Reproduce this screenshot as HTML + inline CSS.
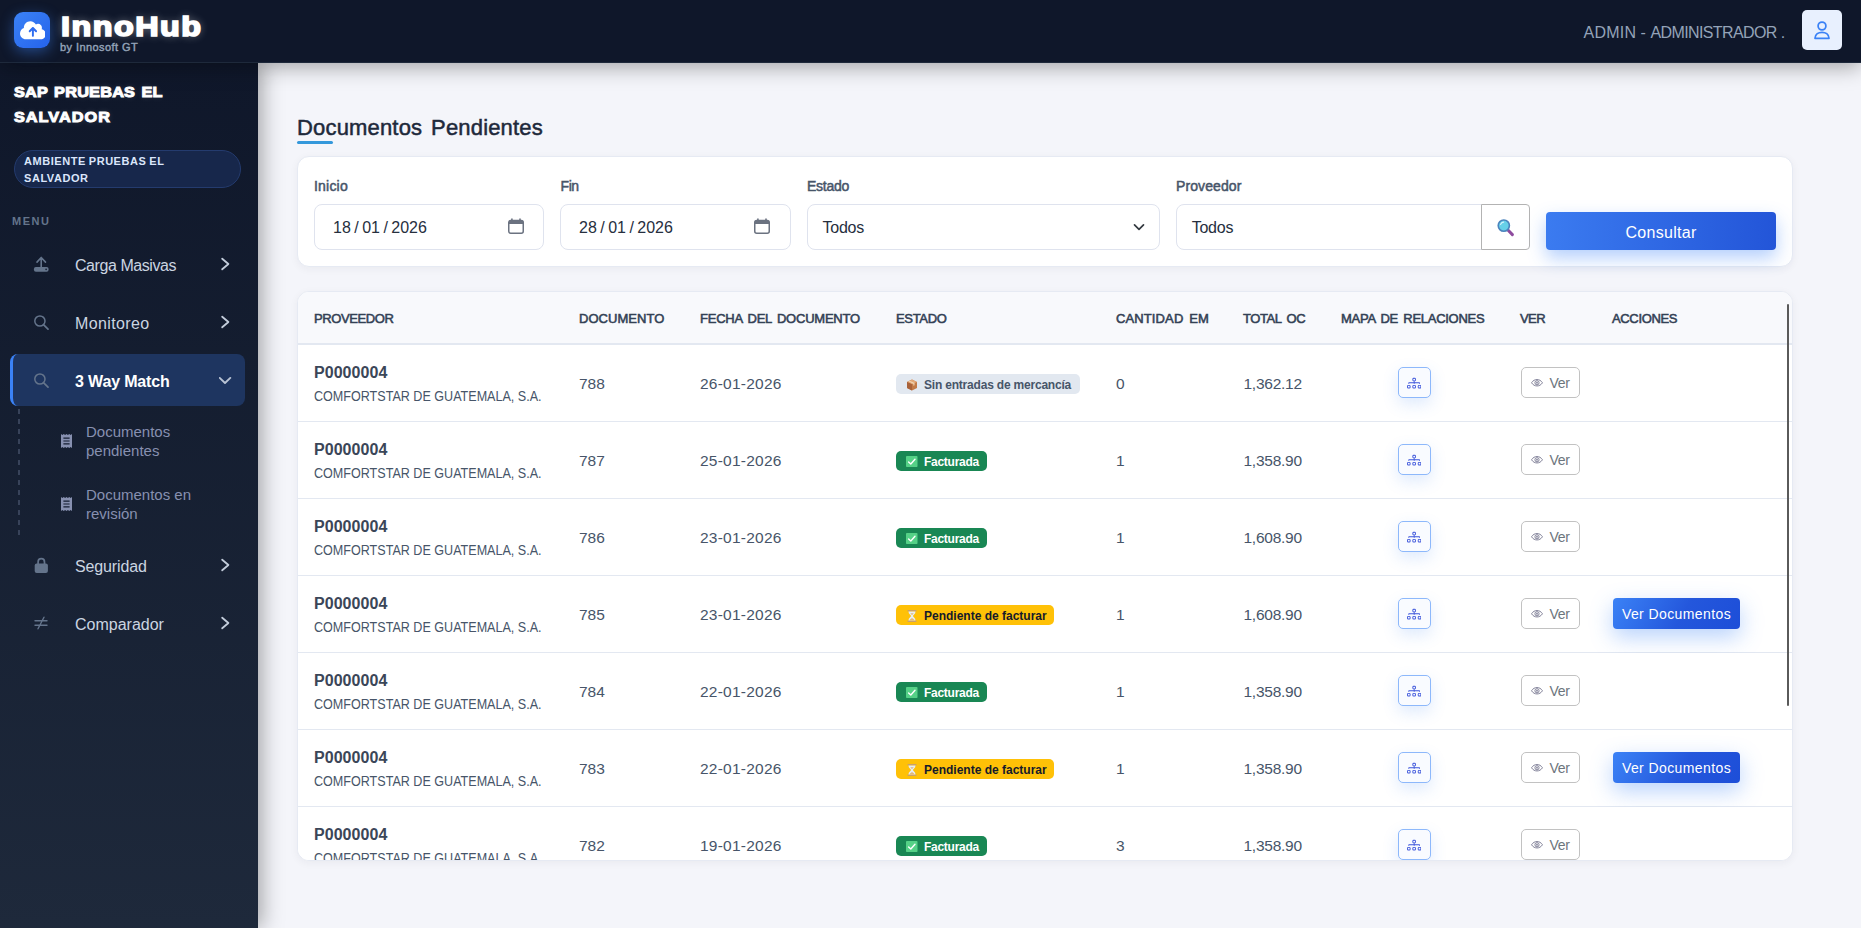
<!DOCTYPE html>
<html lang="es">
<head>
<meta charset="utf-8">
<title>InnoHub - Documentos Pendientes</title>
<style>
*{box-sizing:border-box;margin:0;padding:0}
html,body{width:1861px;height:928px;overflow:hidden}
body{font-family:"Liberation Sans",sans-serif;background:#f4f5fa;color:#334155;position:relative}
.abs{position:absolute}
/* ---------- header ---------- */
#hdr{position:absolute;left:0;top:0;width:1861px;height:63px;background:#0f172a;border-bottom:1px solid #1e293b;z-index:5;box-shadow:0 4px 20px rgba(0,0,0,.34)}
#logo{position:absolute;left:14px;top:12px;width:36px;height:36px;border-radius:9px;background:linear-gradient(135deg,#3b82f6 0%,#2563eb 100%);box-shadow:0 4px 14px rgba(59,130,246,.45)}
#brand{position:absolute;left:60.5px;top:9px;font-size:28px;line-height:36px;font-weight:700;color:#fff;letter-spacing:1.3px;-webkit-text-stroke:1.7px #fff;transform:scaleX(1.155);transform-origin:0 50%;text-shadow:0 0 8px rgba(255,255,255,.45);white-space:nowrap}
#sub{position:absolute;left:60px;top:40px;font-size:11px;line-height:14px;font-weight:400;color:#94a3b8;white-space:nowrap;letter-spacing:.42px;-webkit-text-stroke:.4px #94a3b8}
#user{position:absolute;right:76px;top:22.6px;font-size:16px;line-height:20px;color:#94a3b8;white-space:nowrap;letter-spacing:-.3px}
#avatar{position:absolute;left:1802px;top:10px;width:40px;height:40px;border-radius:5px;background:#e8f0fe}
/* ---------- sidebar ---------- */
#side{position:absolute;left:0;top:63px;width:258px;height:865px;background:linear-gradient(180deg,#0f172a 0%,#1e293b 100%);z-index:4;box-shadow:4px 0 20px rgba(0,0,0,.34)}
#comp{position:absolute;left:14px;top:15.5px;font-size:15.5px;line-height:25px;font-weight:700;color:#fff;-webkit-text-stroke:1px #fff;width:230px;transform:scaleX(1.05);transform-origin:0 0;text-shadow:0 0 6px rgba(255,255,255,.18)}
#env{position:absolute;left:14px;top:87px;width:227px;height:38px;border-radius:19px;background:#17274b;border:1px solid #243b6e;padding:2px 0 0 9px;font-size:11px;line-height:17px;font-weight:700;color:#dbe6fb;letter-spacing:.55px;word-spacing:-.7px}
#menu{position:absolute;left:12px;top:152px;font-size:11px;line-height:13px;font-weight:700;color:#64748b;letter-spacing:1.5px}
.mi{position:absolute;left:10px;width:235px;height:52px;border-radius:8px;color:#cbd5e1;font-size:16px}
.mi .t{position:absolute;left:65px;top:17px;line-height:20px;white-space:nowrap}
.mi svg.ic{position:absolute;left:23px;top:17px;width:16px;height:16px}
.mi svg.ch{position:absolute;left:209px;top:18px;width:14px;height:14px}
.mi.act{background:#1e3560;border-left:3px solid #3b82f6;color:#fff;font-weight:700}
.mi.act .t{left:62px;top:18px}
.mi.act svg.ic{left:20px;top:17.7px}
.mi.act svg.ch{left:206px}
#dash{position:absolute;left:18px;top:346px;width:2px;height:127px;background:repeating-linear-gradient(180deg,#38435a 0,#38435a 5px,transparent 5px,transparent 10.1px)}
.sm{position:absolute;left:86px;font-size:15px;line-height:18.5px;color:#8790b0;width:140px}
.smi{position:absolute;left:61px;width:11px;height:14px}
/* ---------- main ---------- */
#main{position:absolute;left:258px;top:63px;width:1603px;height:865px;background:#f4f5fa}
h1{position:absolute;left:297px;top:114px;font-size:22px;line-height:28px;font-weight:400;color:#1e293b;white-space:nowrap;-webkit-text-stroke:.5px #1e293b;letter-spacing:.17px;word-spacing:2.6px}
#ul{position:absolute;left:297px;top:141px;width:36px;height:3px;border-radius:2px;background:#3498db}
.card{position:absolute;background:#fff;border:1px solid #e6eaf3;border-radius:12px;box-shadow:0 2px 8px rgba(30,41,59,.05)}
#filt{left:297px;top:156px;width:1496px;height:111px}
.lbl{position:absolute;top:177px;font-size:14px;line-height:18px;font-weight:400;color:#475569;-webkit-text-stroke:.5px #475569;letter-spacing:.1px}
.inp{position:absolute;top:204px;height:46px;border:1px solid #dfe3ee;border-radius:8px;background:#fff;font-size:16px;line-height:46px;color:#262f3e;padding-left:15px;white-space:nowrap}
#btnS{position:absolute;left:1481px;top:204px;width:49px;height:46px;border:1px solid #b3b3b3;border-radius:0 4px 4px 0;background:#fff}
#btnC{position:absolute;left:1546px;top:212px;width:230px;height:38px;border-radius:4px;background:linear-gradient(90deg,#3b7bf0 0%,#2355d8 100%);color:#fff;font-size:16px;line-height:39px;padding-top:1px;text-align:center;box-shadow:0 8px 18px rgba(59,130,246,.38);letter-spacing:.3px}
/* ---------- table ---------- */
#tbl{left:297px;top:291px;width:1496px;height:570px;overflow:hidden}
#thead{position:absolute;left:0;top:0;width:1494px;height:53px;background:#f8f9fc;border-bottom:2px solid #e3e8f1}
.th{position:absolute;top:19px;font-size:13px;line-height:15px;font-weight:400;color:#334155;white-space:nowrap;-webkit-text-stroke:.55px #334155}
.row{position:absolute;left:0;width:1494px;height:77px;border-bottom:1px solid #e3e8f1;background:#fff}
.c{position:absolute;white-space:nowrap}
.pc{left:16px;top:17.5px;font-size:16px;letter-spacing:.05px;line-height:20px;font-weight:700;color:#3b4658}
.pn{left:16px;top:42px;font-size:14px;line-height:18px;color:#475569;transform:scaleX(.8975);transform-origin:0 0}
.v{top:28.5px;font-size:15.5px;line-height:20px;color:#475569}
.bdg{position:absolute;left:598px;top:29px;height:20px;border-radius:5px;font-size:12px;line-height:22.5px;font-weight:700;white-space:nowrap;padding-left:28px}
.b-g{background:#198754;color:#fff;width:91px;letter-spacing:-.27px}
.b-y{background:#ffc107;color:#151a2b;width:158px}
.b-s{background:#e2e8f0;color:#475569;width:184px;letter-spacing:-.2px}
.bdg svg{position:absolute;left:10px;top:4.5px;width:12px;height:12px}
.map{position:absolute;left:1100px;top:22px;width:33px;height:31px;border:1px solid #8db8fb;border-radius:5px;background:#f9fbff;box-shadow:0 6px 16px rgba(59,130,246,.17)}
.map svg{position:absolute;left:7.9px;top:8.2px;width:14.3px;height:14.3px}
.ver{position:absolute;left:1223px;top:22px;width:59px;height:31px;border:1px solid #c2c2c2;border-radius:5px;background:#fff;font-size:14px;line-height:31px;color:#6c757d;padding-left:27.5px;letter-spacing:-.25px}
.ver svg{position:absolute;left:9px;top:11.3px;width:12px;height:7.5px}
.vd{position:absolute;left:1315px;top:22px;width:127px;height:31px;border-radius:4px;background:linear-gradient(120deg,#3b82f6 0%,#2457dc 55%,#1d4ed8 100%);color:#fff;font-size:14px;line-height:33px;text-align:center;box-shadow:0 8px 22px rgba(59,130,246,.36);letter-spacing:.4px}
#sb{position:absolute;left:1489.3px;top:12px;width:2.2px;height:402px;background:#5a5a5a;border-radius:1px;z-index:3}
</style>
</head>
<body>
<div id="main"></div>
<!-- SIDEBAR-START -->
<div id="side">
  <div id="comp"><span style="letter-spacing:.2px;word-spacing:1.5px">SAP PRUEBAS EL</span><br><span style="letter-spacing:.96px">SALVADOR</span></div>
  <div id="env">AMBIENTE PRUEBAS EL<br>SALVADOR</div>
  <div id="menu">MENU</div>
  <div class="mi" style="top:176px"><svg class="ic" viewBox="0 0 16 16"><path d="M8.2 1.6 V11.6 M4 6.1 L8.2 1.5 L12.5 6.1" fill="none" stroke="#64748b" stroke-width="1.6" stroke-linecap="round" stroke-linejoin="round"/><rect x=".9" y="11" width="14.7" height="4.7" rx="2" fill="#64748b"/><circle cx="13.1" cy="13.4" r=".8" fill="#0f172a"/></svg><span class="t" style="letter-spacing:-.44px">Carga Masivas</span><svg class="ch" viewBox="0 0 14 14"><path d="M3.2 1.7 L9.400 7 L3.200 12.300" fill="none" stroke="#c3cddb" stroke-width="1.8" stroke-linecap="round" stroke-linejoin="round"/></svg></div>
  <div class="mi" style="top:234px"><svg class="ic" viewBox="0 0 16 16"><circle cx="6.9" cy="7" r="5.1" fill="none" stroke="#64748b" stroke-width="1.5"/><path d="M10.7 10.8 L15 15.2" stroke="#64748b" stroke-width="1.7" stroke-linecap="round"/></svg><span class="t" style="letter-spacing:.38px">Monitoreo</span><svg class="ch" viewBox="0 0 14 14"><path d="M3.2 1.7 L9.400 7 L3.200 12.300" fill="none" stroke="#c3cddb" stroke-width="1.8" stroke-linecap="round" stroke-linejoin="round"/></svg></div>
  <div class="mi act" style="top:291px"><svg class="ic" viewBox="0 0 16 16"><circle cx="6.9" cy="7" r="5.1" fill="none" stroke="#64748b" stroke-width="1.5"/><path d="M10.7 10.8 L15 15.2" stroke="#64748b" stroke-width="1.7" stroke-linecap="round"/></svg><span class="t" style="letter-spacing:-.15px">3 Way Match</span><svg class="ch" viewBox="0 0 14 14"><path d="M.7 5.900 L6 11 L11.300 5.900" fill="none" stroke="#b9c3d4" stroke-width="1.9" stroke-linecap="round" stroke-linejoin="round"/></svg></div>
  <div class="mi" style="top:477px"><svg class="ic" viewBox="0 0 16 16"><path d="M5.1 7 V4.9 a3.2 3.2 0 0 1 6.4 0 V7" fill="none" stroke="#64748b" stroke-width="1.7"/><rect x="1.7" y="6.4" width="13.2" height="9.6" rx="2" fill="#64748b"/></svg><span class="t" style="letter-spacing:-.13px">Seguridad</span><svg class="ch" viewBox="0 0 14 14"><path d="M3.2 1.7 L9.400 7 L3.200 12.300" fill="none" stroke="#c3cddb" stroke-width="1.8" stroke-linecap="round" stroke-linejoin="round"/></svg></div>
  <div class="mi" style="top:535px"><svg class="ic" viewBox="0 0 16 16"><path d="M2 5.8 H14 M2 10.2 H14 M11 2.2 L5 13.8" stroke="#64748b" stroke-width="1.4" fill="none" stroke-linecap="round"/></svg><span class="t">Comparador</span><svg class="ch" viewBox="0 0 14 14"><path d="M3.2 1.7 L9.400 7 L3.200 12.300" fill="none" stroke="#c3cddb" stroke-width="1.8" stroke-linecap="round" stroke-linejoin="round"/></svg></div>
  <div id="dash"></div>
  <svg class="smi" style="top:371px" viewBox="0 0 11 14"><path d="M0 0 L1.4 1 L2.75 0 L4.1 1 L5.5 0 L6.9 1 L8.25 0 L9.6 1 L11 0 V14 L9.6 13 L8.25 14 L6.9 13 L5.5 14 L4.1 13 L2.75 14 L1.4 13 L0 14 Z" fill="#8790b0"/><path d="M2.4 4.2 H8.6 M2.4 7 H8.6 M2.4 9.8 H8.6" stroke="#141c30" stroke-width="1.2"/></svg><div class="sm" style="top:360px">Documentos pendientes</div>
  <svg class="smi" style="top:434px" viewBox="0 0 11 14"><path d="M0 0 L1.4 1 L2.75 0 L4.1 1 L5.5 0 L6.9 1 L8.25 0 L9.6 1 L11 0 V14 L9.6 13 L8.25 14 L6.9 13 L5.5 14 L4.1 13 L2.75 14 L1.4 13 L0 14 Z" fill="#8790b0"/><path d="M2.4 4.2 H8.6 M2.4 7 H8.6 M2.4 9.8 H8.6" stroke="#141c30" stroke-width="1.2"/></svg><div class="sm" style="top:423px">Documentos en revisión</div>
</div>
<!-- SIDEBAR-END -->
<!-- HEADER-START -->
<div id="hdr">
  <div id="logo"><svg style="position:absolute;left:5.6px;top:7.6px" viewBox="0 0 640 512" width="25.8" height="20.64"><path d="M144 480C64.5 480 0 415.5 0 336c0-62.800 40.200-116.200 96.200-135.900c-.1-2.700-.2-5.400-.2-8.100c0-88.400 71.600-160 160-160c59.300 0 111 32.200 138.700 80.200C409.900 102 428.300 96 448 96c53 0 96 43 96 96c0 12.200-2.300 23.800-6.400 34.600C596 238.400 640 290.100 640 352c0 70.700-57.300 128-128 128H144z" fill="#fff"/><path d="M223 263c-9.400 9.400-9.400 24.600 0 33.900s24.600 9.400 33.900 0l39-39V392c0 13.300 10.700 24 24 24s24-10.700 24-24V257.900l39 39c9.400 9.400 24.600 9.400 33.900 0s9.400-24.600 0-33.900l-80-80c-9.400-9.400-24.600-9.400-33.900 0l-80 80z" fill="#2f6df0"/></svg></div>
  <div id="brand">InnoHub</div>
  <div id="sub">by Innosoft GT</div>
  <div id="user"><span style="letter-spacing:.25px">ADMIN</span> <span style="letter-spacing:.6px">-</span> <span style="letter-spacing:-.62px">ADMINISTRADOR</span> .</div>
  <div id="avatar"><svg viewBox="0 0 40 40" width="40" height="40"><circle cx="20" cy="16" r="3.9" fill="none" stroke="#3b82f6" stroke-width="1.75"/><path d="M13 28.3 C13.2 20.3 26.8 20.3 27 28.3 Z" fill="none" stroke="#3b82f6" stroke-width="1.75" stroke-linejoin="round"/></svg></div>
</div>
<!-- HEADER-END -->
<h1>Documentos Pendientes</h1>
<div id="ul"></div>
<div class="card" id="filt"></div>
<div class="lbl" style="left:314px;letter-spacing:.2px">Inicio</div>
<div class="lbl" style="left:560.5px;letter-spacing:-.4px">Fin</div>
<div class="lbl" style="left:807px;letter-spacing:-.27px">Estado</div>
<div class="lbl" style="left:1176px">Proveedor</div>
<div class="inp" style="left:314px;width:230px;padding-left:18px;word-spacing:-1px">18 / 01 / 2026<svg style="position:absolute;left:193px;top:13px" width="16" height="16" viewBox="0 0 16 16"><rect x=".75" y="2.6" width="14.5" height="12.6" rx="2" fill="none" stroke="#6b7280" stroke-width="1.5"/><path d="M.7 4.4 a1.9 1.9 0 0 1 1.9 -1.9 h10.8 a1.9 1.9 0 0 1 1.9 1.9 V5.9 H.7 Z" fill="#6b7280"/><path d="M3.9 .4 V2.8 M12 .4 V2.8" stroke="#6b7280" stroke-width="1.6" stroke-linecap="butt"/></svg></div>
<div class="inp" style="left:560px;width:231px;padding-left:18px;word-spacing:-1px">28 / 01 / 2026<svg style="position:absolute;left:193px;top:13px" width="16" height="16" viewBox="0 0 16 16"><rect x=".75" y="2.6" width="14.5" height="12.6" rx="2" fill="none" stroke="#6b7280" stroke-width="1.5"/><path d="M.7 4.4 a1.9 1.9 0 0 1 1.9 -1.9 h10.8 a1.9 1.9 0 0 1 1.9 1.9 V5.9 H.7 Z" fill="#6b7280"/><path d="M3.9 .4 V2.8 M12 .4 V2.8" stroke="#6b7280" stroke-width="1.6" stroke-linecap="butt"/></svg></div>
<div class="inp" style="left:807px;width:353px;padding-left:14.5px;letter-spacing:-.24px">Todos<svg style="position:absolute;right:13px;top:15px" width="14" height="14" viewBox="0 0 14 14"><path d="M2.5 4.8 L7 9.3 L11.5 4.8" fill="none" stroke="#343a40" stroke-width="1.7" stroke-linecap="round" stroke-linejoin="round"/></svg></div>
<div class="inp" style="left:1176px;width:306px;border-radius:8px 0 0 8px;padding-left:14.7px;letter-spacing:-.24px">Todos</div>
<div id="btnS"><svg style="position:absolute;left:14px;top:13px" width="19" height="19" viewBox="0 0 19 19"><path d="M11.2 11.2 L16.4 16.6" stroke="#8e4b9e" stroke-width="3" stroke-linecap="round"/><circle cx="7.8" cy="7.6" r="5.6" fill="#66d0e8" stroke="#4c84bd" stroke-width="1.6"/><path d="M4.6 6.4 a3.6 3.6 0 0 1 3 -2.3" fill="none" stroke="#d8f2fb" stroke-width="1.2" stroke-linecap="round"/></svg></div>
<div id="btnC">Consultar</div>
<div class="card" id="tbl">
  <div id="thead"><div class="th" style="left:16px;letter-spacing:-0.41px">PROVEEDOR</div><div class="th" style="left:281px;letter-spacing:0.05px">DOCUMENTO</div><div class="th" style="left:402px;letter-spacing:-.24px;word-spacing:2px">FECHA DEL DOCUMENTO</div><div class="th" style="left:598px;letter-spacing:-0.33px">ESTADO</div><div class="th" style="left:818px;letter-spacing:.12px;word-spacing:2px">CANTIDAD EM</div><div class="th" style="left:945px;letter-spacing:-.4px;word-spacing:2px">TOTAL OC</div><div class="th" style="left:1043px;letter-spacing:-.27px;word-spacing:2px">MAPA DE RELACIONES</div><div class="th" style="left:1222px;letter-spacing:-0.6px">VER</div><div class="th" style="left:1314px;letter-spacing:-0.35px">ACCIONES</div></div>
  <div class="row" style="top:53px"><div class="c pc">P0000004</div><div class="c pn">COMFORTSTAR DE GUATEMALA, S.A.</div><div class="c v" style="left:281px">788</div><div class="c v" style="left:402px;letter-spacing:.24px">26-01-2026</div><div class="bdg b-s"><svg viewBox="0 0 12 12"><path d="M6 .6 L11 2.9 V9 L6 11.4 L1 9 V2.9 Z" fill="#c27a48"/><path d="M6 .6 L11 2.9 L6 5.3 L1 2.9 Z" fill="#e3a877"/><path d="M6 5.3 V11.4 L1 9 V2.9 Z" fill="#a9623a"/><path d="M3.4 1.8 L8.5 4.1 V6.2 L7.4 6.7 V4.7 L2.3 2.3 Z" fill="#f1d7b8"/></svg>Sin entradas de mercancía</div><div class="c v" style="left:818px">0</div><div class="c v" style="left:945.5px;letter-spacing:-.26px">1,362.12</div><div class="map"><svg viewBox="0 0 16 16"><path d="M6 3.5A1.5 1.5 0 0 1 7.5 2h1A1.5 1.5 0 0 1 10 3.5v1A1.5 1.5 0 0 1 8.5 6v1H14a.5.5 0 0 1 .5.5v1a.5.5 0 0 1-1 0V8h-5v.5a.5.5 0 0 1-1 0V8h-5v.5a.5.5 0 0 1-1 0v-1A.5.5 0 0 1 2 7h5.5V6A1.5 1.5 0 0 1 6 4.5zM8.5 5a.5.5 0 0 0 .5-.5v-1a.5.5 0 0 0-.5-.5h-1a.5.5 0 0 0-.5.5v1a.5.5 0 0 0 .5.5zM0 11.5A1.5 1.5 0 0 1 1.5 10h1A1.5 1.5 0 0 1 4 11.5v1A1.5 1.5 0 0 1 2.5 14h-1A1.5 1.5 0 0 1 0 12.5zm1.5-.5a.5.5 0 0 0-.5.5v1a.5.5 0 0 0 .5.5h1a.5.5 0 0 0 .5-.5v-1a.5.5 0 0 0-.5-.5zm4.500.5A1.5 1.5 0 0 1 7.5 10h1a1.5 1.5 0 0 1 1.5 1.5v1A1.5 1.5 0 0 1 8.5 14h-1A1.5 1.5 0 0 1 6 12.5zm1.5-.5a.5.5 0 0 0-.5.5v1a.5.5 0 0 0 .5.5h1a.5.5 0 0 0 .5-.5v-1a.5.5 0 0 0-.5-.5zm4.500.5a1.5 1.5 0 0 1 1.5-1.5h1a1.5 1.5 0 0 1 1.5 1.5v1a1.5 1.5 0 0 1-1.5 1.5h-1a1.5 1.5 0 0 1-1.5-1.5zm1.5-.5a.5.5 0 0 0-.5.5v1a.5.5 0 0 0 .5.5h1a.5.5 0 0 0 .5-.5v-1a.5.5 0 0 0-.5-.5z" fill="#3d55db"/></svg></div><div class="ver"><svg viewBox="0 0 12 7.5"><path d="M.5 3.75 C2 1.5 3.9 .55 6 .55 S10 1.5 11.5 3.75 C10 6 8.100 6.950 6 6.950 S2 6 .5 3.750 Z" fill="none" stroke="#83839a" stroke-width="1"/><circle cx="6" cy="3.75" r="2.1" fill="none" stroke="#83839a" stroke-width="1"/><circle cx="6" cy="3.75" r=".9" fill="#83839a"/></svg>Ver</div></div>
  <div class="row" style="top:130px"><div class="c pc">P0000004</div><div class="c pn">COMFORTSTAR DE GUATEMALA, S.A.</div><div class="c v" style="left:281px">787</div><div class="c v" style="left:402px;letter-spacing:.24px">25-01-2026</div><div class="bdg b-g"><svg viewBox="0 0 12 12"><rect x="0" y="0" width="11.5" height="11" rx=".8" fill="#55d187"/><path d="M2.6 5.9 L4.8 8 L9 3.3" fill="none" stroke="#fff" stroke-width="1.4" stroke-linecap="round" stroke-linejoin="round"/></svg>Facturada</div><div class="c v" style="left:818px">1</div><div class="c v" style="left:945.5px;letter-spacing:-.26px">1,358.90</div><div class="map"><svg viewBox="0 0 16 16"><path d="M6 3.5A1.5 1.5 0 0 1 7.5 2h1A1.5 1.5 0 0 1 10 3.5v1A1.5 1.5 0 0 1 8.5 6v1H14a.5.5 0 0 1 .5.5v1a.5.5 0 0 1-1 0V8h-5v.5a.5.5 0 0 1-1 0V8h-5v.5a.5.5 0 0 1-1 0v-1A.5.5 0 0 1 2 7h5.5V6A1.5 1.5 0 0 1 6 4.5zM8.5 5a.5.5 0 0 0 .5-.5v-1a.5.5 0 0 0-.5-.5h-1a.5.5 0 0 0-.5.5v1a.5.5 0 0 0 .5.5zM0 11.5A1.5 1.5 0 0 1 1.5 10h1A1.5 1.5 0 0 1 4 11.5v1A1.5 1.5 0 0 1 2.5 14h-1A1.5 1.5 0 0 1 0 12.5zm1.5-.5a.5.5 0 0 0-.5.5v1a.5.5 0 0 0 .5.5h1a.5.5 0 0 0 .5-.5v-1a.5.5 0 0 0-.5-.5zm4.500.5A1.5 1.5 0 0 1 7.5 10h1a1.5 1.5 0 0 1 1.5 1.5v1A1.5 1.5 0 0 1 8.5 14h-1A1.5 1.5 0 0 1 6 12.5zm1.5-.5a.5.5 0 0 0-.5.5v1a.5.5 0 0 0 .5.5h1a.5.5 0 0 0 .5-.5v-1a.5.5 0 0 0-.5-.5zm4.500.5a1.5 1.5 0 0 1 1.5-1.5h1a1.5 1.5 0 0 1 1.5 1.5v1a1.5 1.5 0 0 1-1.5 1.5h-1a1.5 1.5 0 0 1-1.5-1.5zm1.5-.5a.5.5 0 0 0-.5.5v1a.5.5 0 0 0 .5.5h1a.5.5 0 0 0 .5-.5v-1a.5.5 0 0 0-.5-.5z" fill="#3d55db"/></svg></div><div class="ver"><svg viewBox="0 0 12 7.5"><path d="M.5 3.75 C2 1.5 3.9 .55 6 .55 S10 1.5 11.5 3.75 C10 6 8.100 6.950 6 6.950 S2 6 .5 3.750 Z" fill="none" stroke="#83839a" stroke-width="1"/><circle cx="6" cy="3.75" r="2.1" fill="none" stroke="#83839a" stroke-width="1"/><circle cx="6" cy="3.75" r=".9" fill="#83839a"/></svg>Ver</div></div>
  <div class="row" style="top:207px"><div class="c pc">P0000004</div><div class="c pn">COMFORTSTAR DE GUATEMALA, S.A.</div><div class="c v" style="left:281px">786</div><div class="c v" style="left:402px;letter-spacing:.24px">23-01-2026</div><div class="bdg b-g"><svg viewBox="0 0 12 12"><rect x="0" y="0" width="11.5" height="11" rx=".8" fill="#55d187"/><path d="M2.6 5.9 L4.8 8 L9 3.3" fill="none" stroke="#fff" stroke-width="1.4" stroke-linecap="round" stroke-linejoin="round"/></svg>Facturada</div><div class="c v" style="left:818px">1</div><div class="c v" style="left:945.5px;letter-spacing:-.26px">1,608.90</div><div class="map"><svg viewBox="0 0 16 16"><path d="M6 3.5A1.5 1.5 0 0 1 7.5 2h1A1.5 1.5 0 0 1 10 3.5v1A1.5 1.5 0 0 1 8.5 6v1H14a.5.5 0 0 1 .5.5v1a.5.5 0 0 1-1 0V8h-5v.5a.5.5 0 0 1-1 0V8h-5v.5a.5.5 0 0 1-1 0v-1A.5.5 0 0 1 2 7h5.5V6A1.5 1.5 0 0 1 6 4.5zM8.5 5a.5.5 0 0 0 .5-.5v-1a.5.5 0 0 0-.5-.5h-1a.5.5 0 0 0-.5.5v1a.5.5 0 0 0 .5.5zM0 11.5A1.5 1.5 0 0 1 1.5 10h1A1.5 1.5 0 0 1 4 11.5v1A1.5 1.5 0 0 1 2.5 14h-1A1.5 1.5 0 0 1 0 12.5zm1.5-.5a.5.5 0 0 0-.5.5v1a.5.5 0 0 0 .5.5h1a.5.5 0 0 0 .5-.5v-1a.5.5 0 0 0-.5-.5zm4.500.5A1.5 1.5 0 0 1 7.5 10h1a1.5 1.5 0 0 1 1.5 1.5v1A1.5 1.5 0 0 1 8.5 14h-1A1.5 1.5 0 0 1 6 12.5zm1.5-.5a.5.5 0 0 0-.5.5v1a.5.5 0 0 0 .5.5h1a.5.5 0 0 0 .5-.5v-1a.5.5 0 0 0-.5-.5zm4.500.5a1.5 1.5 0 0 1 1.5-1.5h1a1.5 1.5 0 0 1 1.5 1.5v1a1.5 1.5 0 0 1-1.5 1.5h-1a1.5 1.5 0 0 1-1.5-1.5zm1.5-.5a.5.5 0 0 0-.5.5v1a.5.5 0 0 0 .5.5h1a.5.5 0 0 0 .5-.5v-1a.5.5 0 0 0-.5-.5z" fill="#3d55db"/></svg></div><div class="ver"><svg viewBox="0 0 12 7.5"><path d="M.5 3.75 C2 1.5 3.9 .55 6 .55 S10 1.5 11.5 3.75 C10 6 8.100 6.950 6 6.950 S2 6 .5 3.750 Z" fill="none" stroke="#83839a" stroke-width="1"/><circle cx="6" cy="3.75" r="2.1" fill="none" stroke="#83839a" stroke-width="1"/><circle cx="6" cy="3.75" r=".9" fill="#83839a"/></svg>Ver</div></div>
  <div class="row" style="top:284px"><div class="c pc">P0000004</div><div class="c pn">COMFORTSTAR DE GUATEMALA, S.A.</div><div class="c v" style="left:281px">785</div><div class="c v" style="left:402px;letter-spacing:.24px">23-01-2026</div><div class="bdg b-y"><svg viewBox="0 0 12 12"><path d="M1.6 0 H10.400 V1.500 H1.600 Z M1.600 10.500 H10.400 V12 H1.600 Z" fill="#c9a06c"/><path d="M2.500 1.500 H9.500 C9.500 4 7.200 5.100 6.900 6 C7.200 6.900 9.500 8 9.500 10.500 H2.500 C2.500 8 4.800 6.900 5.100 6 C4.800 5.100 2.500 4 2.500 1.500 Z" fill="#e6edf5"/><path d="M3.600 10.500 C3.900 9.100 5.200 8.700 6 8 C6.800 8.700 8.100 9.100 8.400 10.500 Z M4.300 3.300 H7.700 C7.300 4.100 6.500 4.600 6 5.100 C5.500 4.600 4.700 4.100 4.300 3.300 Z" fill="#e3b878"/></svg>Pendiente de facturar</div><div class="c v" style="left:818px">1</div><div class="c v" style="left:945.5px;letter-spacing:-.26px">1,608.90</div><div class="map"><svg viewBox="0 0 16 16"><path d="M6 3.5A1.5 1.5 0 0 1 7.5 2h1A1.5 1.5 0 0 1 10 3.5v1A1.5 1.5 0 0 1 8.5 6v1H14a.5.5 0 0 1 .5.5v1a.5.5 0 0 1-1 0V8h-5v.5a.5.5 0 0 1-1 0V8h-5v.5a.5.5 0 0 1-1 0v-1A.5.5 0 0 1 2 7h5.5V6A1.5 1.5 0 0 1 6 4.5zM8.5 5a.5.5 0 0 0 .5-.5v-1a.5.5 0 0 0-.5-.5h-1a.5.5 0 0 0-.5.5v1a.5.5 0 0 0 .5.5zM0 11.5A1.5 1.5 0 0 1 1.5 10h1A1.5 1.5 0 0 1 4 11.5v1A1.5 1.5 0 0 1 2.5 14h-1A1.5 1.5 0 0 1 0 12.5zm1.5-.5a.5.5 0 0 0-.5.5v1a.5.5 0 0 0 .5.5h1a.5.5 0 0 0 .5-.5v-1a.5.5 0 0 0-.5-.5zm4.500.5A1.5 1.5 0 0 1 7.5 10h1a1.5 1.5 0 0 1 1.5 1.5v1A1.5 1.5 0 0 1 8.5 14h-1A1.5 1.5 0 0 1 6 12.5zm1.5-.5a.5.5 0 0 0-.5.5v1a.5.5 0 0 0 .5.5h1a.5.5 0 0 0 .5-.5v-1a.5.5 0 0 0-.5-.5zm4.500.5a1.5 1.5 0 0 1 1.5-1.5h1a1.5 1.5 0 0 1 1.5 1.5v1a1.5 1.5 0 0 1-1.5 1.5h-1a1.5 1.5 0 0 1-1.5-1.5zm1.5-.5a.5.5 0 0 0-.5.5v1a.5.5 0 0 0 .5.5h1a.5.5 0 0 0 .5-.5v-1a.5.5 0 0 0-.5-.5z" fill="#3d55db"/></svg></div><div class="ver"><svg viewBox="0 0 12 7.5"><path d="M.5 3.75 C2 1.5 3.9 .55 6 .55 S10 1.5 11.5 3.75 C10 6 8.100 6.950 6 6.950 S2 6 .5 3.750 Z" fill="none" stroke="#83839a" stroke-width="1"/><circle cx="6" cy="3.75" r="2.1" fill="none" stroke="#83839a" stroke-width="1"/><circle cx="6" cy="3.75" r=".9" fill="#83839a"/></svg>Ver</div><div class="vd">Ver Documentos</div></div>
  <div class="row" style="top:361px"><div class="c pc">P0000004</div><div class="c pn">COMFORTSTAR DE GUATEMALA, S.A.</div><div class="c v" style="left:281px">784</div><div class="c v" style="left:402px;letter-spacing:.24px">22-01-2026</div><div class="bdg b-g"><svg viewBox="0 0 12 12"><rect x="0" y="0" width="11.5" height="11" rx=".8" fill="#55d187"/><path d="M2.6 5.9 L4.8 8 L9 3.3" fill="none" stroke="#fff" stroke-width="1.4" stroke-linecap="round" stroke-linejoin="round"/></svg>Facturada</div><div class="c v" style="left:818px">1</div><div class="c v" style="left:945.5px;letter-spacing:-.26px">1,358.90</div><div class="map"><svg viewBox="0 0 16 16"><path d="M6 3.5A1.5 1.5 0 0 1 7.5 2h1A1.5 1.5 0 0 1 10 3.5v1A1.5 1.5 0 0 1 8.5 6v1H14a.5.5 0 0 1 .5.5v1a.5.5 0 0 1-1 0V8h-5v.5a.5.5 0 0 1-1 0V8h-5v.5a.5.5 0 0 1-1 0v-1A.5.5 0 0 1 2 7h5.5V6A1.5 1.5 0 0 1 6 4.5zM8.5 5a.5.5 0 0 0 .5-.5v-1a.5.5 0 0 0-.5-.5h-1a.5.5 0 0 0-.5.5v1a.5.5 0 0 0 .5.5zM0 11.5A1.5 1.5 0 0 1 1.5 10h1A1.5 1.5 0 0 1 4 11.5v1A1.5 1.5 0 0 1 2.5 14h-1A1.5 1.5 0 0 1 0 12.5zm1.5-.5a.5.5 0 0 0-.5.5v1a.5.5 0 0 0 .5.5h1a.5.5 0 0 0 .5-.5v-1a.5.5 0 0 0-.5-.5zm4.500.5A1.5 1.5 0 0 1 7.5 10h1a1.5 1.5 0 0 1 1.5 1.5v1A1.5 1.5 0 0 1 8.5 14h-1A1.5 1.5 0 0 1 6 12.5zm1.5-.5a.5.5 0 0 0-.5.5v1a.5.5 0 0 0 .5.5h1a.5.5 0 0 0 .5-.5v-1a.5.5 0 0 0-.5-.5zm4.500.5a1.5 1.5 0 0 1 1.5-1.5h1a1.5 1.5 0 0 1 1.5 1.5v1a1.5 1.5 0 0 1-1.5 1.5h-1a1.5 1.5 0 0 1-1.5-1.5zm1.5-.5a.5.5 0 0 0-.5.5v1a.5.5 0 0 0 .5.5h1a.5.5 0 0 0 .5-.5v-1a.5.5 0 0 0-.5-.5z" fill="#3d55db"/></svg></div><div class="ver"><svg viewBox="0 0 12 7.5"><path d="M.5 3.75 C2 1.5 3.9 .55 6 .55 S10 1.5 11.5 3.75 C10 6 8.100 6.950 6 6.950 S2 6 .5 3.750 Z" fill="none" stroke="#83839a" stroke-width="1"/><circle cx="6" cy="3.75" r="2.1" fill="none" stroke="#83839a" stroke-width="1"/><circle cx="6" cy="3.75" r=".9" fill="#83839a"/></svg>Ver</div></div>
  <div class="row" style="top:438px"><div class="c pc">P0000004</div><div class="c pn">COMFORTSTAR DE GUATEMALA, S.A.</div><div class="c v" style="left:281px">783</div><div class="c v" style="left:402px;letter-spacing:.24px">22-01-2026</div><div class="bdg b-y"><svg viewBox="0 0 12 12"><path d="M1.6 0 H10.400 V1.500 H1.600 Z M1.600 10.500 H10.400 V12 H1.600 Z" fill="#c9a06c"/><path d="M2.500 1.500 H9.500 C9.500 4 7.200 5.100 6.900 6 C7.200 6.900 9.500 8 9.500 10.500 H2.500 C2.500 8 4.800 6.900 5.100 6 C4.800 5.100 2.500 4 2.500 1.500 Z" fill="#e6edf5"/><path d="M3.600 10.500 C3.900 9.100 5.200 8.700 6 8 C6.800 8.700 8.100 9.100 8.400 10.500 Z M4.300 3.300 H7.700 C7.300 4.100 6.500 4.600 6 5.100 C5.500 4.600 4.700 4.100 4.300 3.300 Z" fill="#e3b878"/></svg>Pendiente de facturar</div><div class="c v" style="left:818px">1</div><div class="c v" style="left:945.5px;letter-spacing:-.26px">1,358.90</div><div class="map"><svg viewBox="0 0 16 16"><path d="M6 3.5A1.5 1.5 0 0 1 7.5 2h1A1.5 1.5 0 0 1 10 3.5v1A1.5 1.5 0 0 1 8.5 6v1H14a.5.5 0 0 1 .5.5v1a.5.5 0 0 1-1 0V8h-5v.5a.5.5 0 0 1-1 0V8h-5v.5a.5.5 0 0 1-1 0v-1A.5.5 0 0 1 2 7h5.5V6A1.5 1.5 0 0 1 6 4.5zM8.5 5a.5.5 0 0 0 .5-.5v-1a.5.5 0 0 0-.5-.5h-1a.5.5 0 0 0-.5.5v1a.5.5 0 0 0 .5.5zM0 11.5A1.5 1.5 0 0 1 1.5 10h1A1.5 1.5 0 0 1 4 11.5v1A1.5 1.5 0 0 1 2.5 14h-1A1.5 1.5 0 0 1 0 12.5zm1.5-.5a.5.5 0 0 0-.5.5v1a.5.5 0 0 0 .5.5h1a.5.5 0 0 0 .5-.5v-1a.5.5 0 0 0-.5-.5zm4.500.5A1.5 1.5 0 0 1 7.5 10h1a1.5 1.5 0 0 1 1.5 1.5v1A1.5 1.5 0 0 1 8.5 14h-1A1.5 1.5 0 0 1 6 12.5zm1.5-.5a.5.5 0 0 0-.5.5v1a.5.5 0 0 0 .5.5h1a.5.5 0 0 0 .5-.5v-1a.5.5 0 0 0-.5-.5zm4.500.5a1.5 1.5 0 0 1 1.5-1.5h1a1.5 1.5 0 0 1 1.5 1.5v1a1.5 1.5 0 0 1-1.5 1.5h-1a1.5 1.5 0 0 1-1.5-1.5zm1.5-.5a.5.5 0 0 0-.5.5v1a.5.5 0 0 0 .5.5h1a.5.5 0 0 0 .5-.5v-1a.5.5 0 0 0-.5-.5z" fill="#3d55db"/></svg></div><div class="ver"><svg viewBox="0 0 12 7.5"><path d="M.5 3.75 C2 1.5 3.9 .55 6 .55 S10 1.5 11.5 3.75 C10 6 8.100 6.950 6 6.950 S2 6 .5 3.750 Z" fill="none" stroke="#83839a" stroke-width="1"/><circle cx="6" cy="3.75" r="2.1" fill="none" stroke="#83839a" stroke-width="1"/><circle cx="6" cy="3.75" r=".9" fill="#83839a"/></svg>Ver</div><div class="vd">Ver Documentos</div></div>
  <div class="row" style="top:515px"><div class="c pc">P0000004</div><div class="c pn">COMFORTSTAR DE GUATEMALA, S.A.</div><div class="c v" style="left:281px">782</div><div class="c v" style="left:402px;letter-spacing:.24px">19-01-2026</div><div class="bdg b-g"><svg viewBox="0 0 12 12"><rect x="0" y="0" width="11.5" height="11" rx=".8" fill="#55d187"/><path d="M2.6 5.9 L4.8 8 L9 3.3" fill="none" stroke="#fff" stroke-width="1.4" stroke-linecap="round" stroke-linejoin="round"/></svg>Facturada</div><div class="c v" style="left:818px">3</div><div class="c v" style="left:945.5px;letter-spacing:-.26px">1,358.90</div><div class="map"><svg viewBox="0 0 16 16"><path d="M6 3.5A1.5 1.5 0 0 1 7.5 2h1A1.5 1.5 0 0 1 10 3.5v1A1.5 1.5 0 0 1 8.5 6v1H14a.5.5 0 0 1 .5.5v1a.5.5 0 0 1-1 0V8h-5v.5a.5.5 0 0 1-1 0V8h-5v.5a.5.5 0 0 1-1 0v-1A.5.5 0 0 1 2 7h5.5V6A1.5 1.5 0 0 1 6 4.5zM8.5 5a.5.5 0 0 0 .5-.5v-1a.5.5 0 0 0-.5-.5h-1a.5.5 0 0 0-.5.5v1a.5.5 0 0 0 .5.5zM0 11.5A1.5 1.5 0 0 1 1.5 10h1A1.5 1.5 0 0 1 4 11.5v1A1.5 1.5 0 0 1 2.5 14h-1A1.5 1.5 0 0 1 0 12.5zm1.5-.5a.5.5 0 0 0-.5.5v1a.5.5 0 0 0 .5.5h1a.5.5 0 0 0 .5-.5v-1a.5.5 0 0 0-.5-.5zm4.500.5A1.5 1.5 0 0 1 7.5 10h1a1.5 1.5 0 0 1 1.5 1.5v1A1.5 1.5 0 0 1 8.5 14h-1A1.5 1.5 0 0 1 6 12.5zm1.5-.5a.5.5 0 0 0-.5.5v1a.5.5 0 0 0 .5.5h1a.5.5 0 0 0 .5-.5v-1a.5.5 0 0 0-.5-.5zm4.500.5a1.5 1.5 0 0 1 1.5-1.5h1a1.5 1.5 0 0 1 1.5 1.5v1a1.5 1.5 0 0 1-1.5 1.5h-1a1.5 1.5 0 0 1-1.5-1.5zm1.5-.5a.5.5 0 0 0-.5.5v1a.5.5 0 0 0 .5.5h1a.5.5 0 0 0 .5-.5v-1a.5.5 0 0 0-.5-.5z" fill="#3d55db"/></svg></div><div class="ver"><svg viewBox="0 0 12 7.5"><path d="M.5 3.75 C2 1.5 3.9 .55 6 .55 S10 1.5 11.5 3.75 C10 6 8.100 6.950 6 6.950 S2 6 .5 3.750 Z" fill="none" stroke="#83839a" stroke-width="1"/><circle cx="6" cy="3.75" r="2.1" fill="none" stroke="#83839a" stroke-width="1"/><circle cx="6" cy="3.75" r=".9" fill="#83839a"/></svg>Ver</div></div>
  <div id="sb"></div>
</div>
</body>
</html>
